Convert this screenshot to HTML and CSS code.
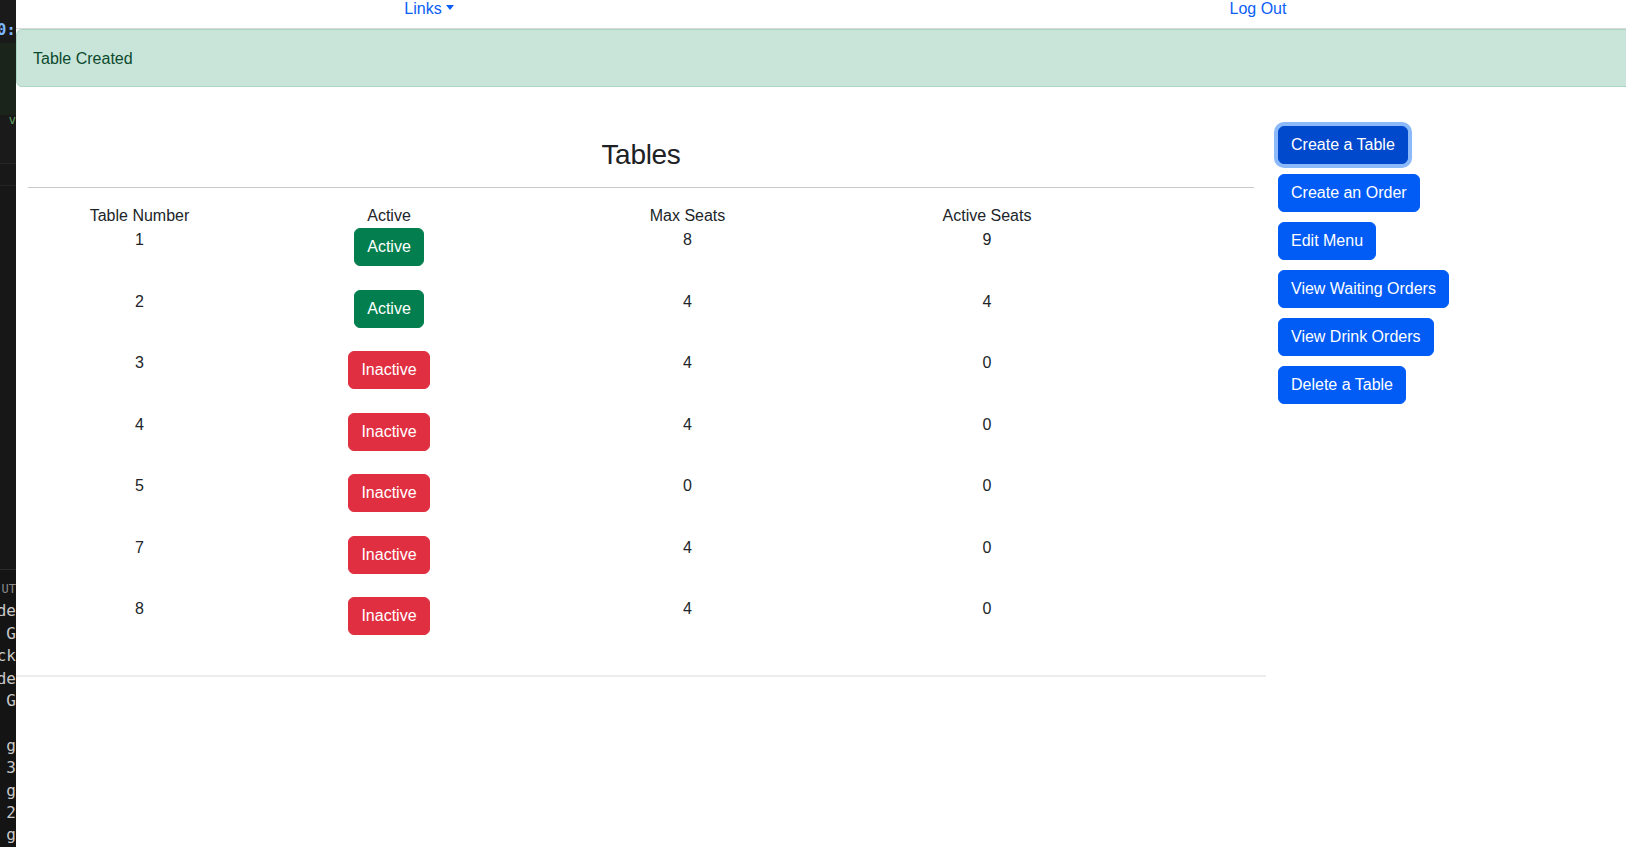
FILE: index.html
```html
<!DOCTYPE html>
<html lang="en">
<head>
<meta charset="utf-8">
<title>Tables</title>
<link rel="stylesheet" href="styles.css">
</head>
<body>
<div class="app">
  <aside class="strip">
    <div class="strip-top"><div class="sline blue">0:</div></div>
    <div class="strip-green"></div>
    <div class="strip-mid"><div class="sline green small">v</div></div>
    <div class="strip-sep"></div>
    <div class="strip-sep2"></div>
    <div class="strip-fill"></div>
    <div class="strip-term">
      <div class="sline dim tiny">UT</div>
      <div class="sline">de</div>
      <div class="sline">G</div>
      <div class="sline">ck</div>
      <div class="sline">de</div>
      <div class="sline">G</div>
      <div class="sline"> </div>
      <div class="sline">g</div>
      <div class="sline">3</div>
      <div class="sline">g</div>
      <div class="sline">2</div>
      <div class="sline">g</div>
    </div>
  </aside>
  <div class="viewport">
    <div class="page">
      <nav class="topnav">
        <div class="nav-cell"><a class="nav-link dropdown" href="#">Links</a></div>
        <div class="nav-cell"><a class="nav-link" href="#">Log Out</a></div>
      </nav>
      <div class="alert">Table Created</div>
      <div class="layout">
        <main class="main-col">
          <h3 class="title">Tables</h3>
          <hr class="rule">
          <table class="tables">
            <thead>
              <tr>
                <th class="c1">Table Number</th>
                <th class="c2">Active</th>
                <th class="c3">Max Seats</th>
                <th class="c4">Active Seats</th>
                <th class="c5"></th>
              </tr>
            </thead>
            <tbody>
              <tr><td>1</td><td><span class="badge on">Active</span></td><td>8</td><td>9</td><td></td></tr>
              <tr><td>2</td><td><span class="badge on">Active</span></td><td>4</td><td>4</td><td></td></tr>
              <tr><td>3</td><td><span class="badge off">Inactive</span></td><td>4</td><td>0</td><td></td></tr>
              <tr><td>4</td><td><span class="badge off">Inactive</span></td><td>4</td><td>0</td><td></td></tr>
              <tr><td>5</td><td><span class="badge off">Inactive</span></td><td>0</td><td>0</td><td></td></tr>
              <tr><td>7</td><td><span class="badge off">Inactive</span></td><td>4</td><td>0</td><td></td></tr>
              <tr><td>8</td><td><span class="badge off">Inactive</span></td><td>4</td><td>0</td><td></td></tr>
            </tbody>
          </table>
          <hr class="rule-bottom">
        </main>
        <aside class="side-col">
          <button class="btn focused">Create a Table</button>
          <button class="btn">Create an Order</button>
          <button class="btn">Edit Menu</button>
          <button class="btn">View Waiting Orders</button>
          <button class="btn">View Drink Orders</button>
          <button class="btn">Delete a Table</button>
        </aside>
      </div>
    </div>
  </div>
</div>
</body>
</html>
```

FILE: styles.css
```css
* { box-sizing: border-box; }

html, body {
  margin: 0;
  padding: 0;
  height: 100%;
  overflow: hidden;
  background: #ffffff;
}

body {
  font-family: "Liberation Sans", Arial, sans-serif;
  font-size: 16px;
  line-height: 24px;
  color: #212529;
}

.app {
  display: flex;
  height: 847px;
}

/* left editor strip */
.strip {
  width: 16px;
  flex: 0 0 16px;
  background: #171717;
  display: flex;
  flex-direction: column;
  overflow: hidden;
  font-family: "DejaVu Sans Mono", monospace;
  font-size: 16px;
  color: #c8c8c8;
}

.strip-top {
  height: 43px;
  background: #1a1a1a;
  padding-top: 21px;
}

.strip-green {
  height: 72px;
  background: #1b241b;
}

.strip-mid {
  height: 48px;
  background: #1a1a1a;
}

.strip-sep {
  height: 22px;
  border-top: 1px solid #262626;
  background: #181818;
}

.strip-sep2 {
  height: 0;
  border-top: 1px solid #242424;
}

.strip-fill {
  height: 383px;
  background: #171717;
}

.strip-term {
  border-top: 1px solid #2a2a2a;
  padding-top: 8px;
  background: #141414;
  flex: 1;
}

.sline {
  display: flex;
  justify-content: flex-end;
  white-space: pre;
  height: 22.4px;
  line-height: 22.4px;
  overflow: hidden;
}

.sline.blue { color: #7cb7ff; font-weight: bold; height: 18px; line-height: 18px; }
.sline.green { color: #5ea35e; font-size: 12px; height: 14px; line-height: 10px; }
.sline.dim { color: #8a8a8a; }
.sline.tiny { font-size: 12px; }

/* page */
.viewport {
  flex: 1;
  overflow: hidden;
}

.page {
  width: 1664px;
}

.topnav {
  display: grid;
  grid-template-columns: 826px 832px;
  height: 29px;
  border-bottom: 1px solid #d9d9d9;
  overflow: hidden;
}

.nav-cell {
  display: flex;
  justify-content: center;
  margin-top: -3px;
}

.nav-link {
  color: #0a5ef5;
  text-decoration: none;
  line-height: 24px;
}

.dropdown::after {
  content: "";
  display: inline-block;
  margin-left: 4px;
  vertical-align: 4px;
  border-top: 5px solid #0a5ef5;
  border-left: 4px solid transparent;
  border-right: 4px solid transparent;
}

.alert {
  background: #c9e4d9;
  border: 1px solid #abd6c4;
  color: #0c4a2d;
  border-radius: 6px;
  padding: 17px 16px 15px;
  height: 58px;
}

.layout {
  display: flex;
  align-items: flex-start;
}

.main-col {
  width: 1250px;
  flex: 0 0 1250px;
  padding: 51px 12px 0;
}

.title {
  margin: 0;
  font-size: 28px;
  line-height: 34px;
  font-weight: 500;
  text-align: center;
  color: #1d2125;
  letter-spacing: -0.3px;
}

.rule {
  margin: 15px 0 16px;
  border: 0;
  border-top: 1px solid #c9c9c9;
  height: 0;
}

.tables {
  border-collapse: collapse;
  table-layout: fixed;
  width: 1226px;
}

.tables th,
.tables td {
  padding: 0;
  text-align: center;
  vertical-align: top;
  font-weight: normal;
  line-height: 24px;
}

.tables thead tr { height: 24px; }
.tables tbody tr { height: 61.5px; }

.c1 { width: 223px; }
.c2 { width: 276px; }
.c3 { width: 321px; }
.c4 { width: 278px; }
.c5 { width: 128px; }

.badge {
  display: inline-block;
  padding: 6px 12px;
  border-radius: 6px;
  color: #ffffff;
  line-height: 24px;
  border: 1px solid transparent;
}

.badge.on { background: #037f4f; border-color: #037f4f; }
.badge.off { background: #e12f42; border-color: #e12f42; }

.rule-bottom {
  margin: 16.5px -12px 0;
  border: 0;
  border-top: 2px solid #ececec;
  height: 0;
}

.side-col {
  padding: 39px 12px 0;
  display: flex;
  flex-direction: column;
  align-items: flex-start;
  gap: 10px;
}

.btn {
  font-family: "Liberation Sans", Arial, sans-serif;
  font-size: 16px;
  line-height: 24px;
  padding: 6px 12px;
  border: 1px solid #005cf5;
  background: #005cf5;
  color: #ffffff;
  border-radius: 6px;
  cursor: pointer;
}

.btn.focused {
  background: #0049cc;
  border-color: #0049cc;
  box-shadow: 0 0 0 4px #8bb9f9;
}
```
